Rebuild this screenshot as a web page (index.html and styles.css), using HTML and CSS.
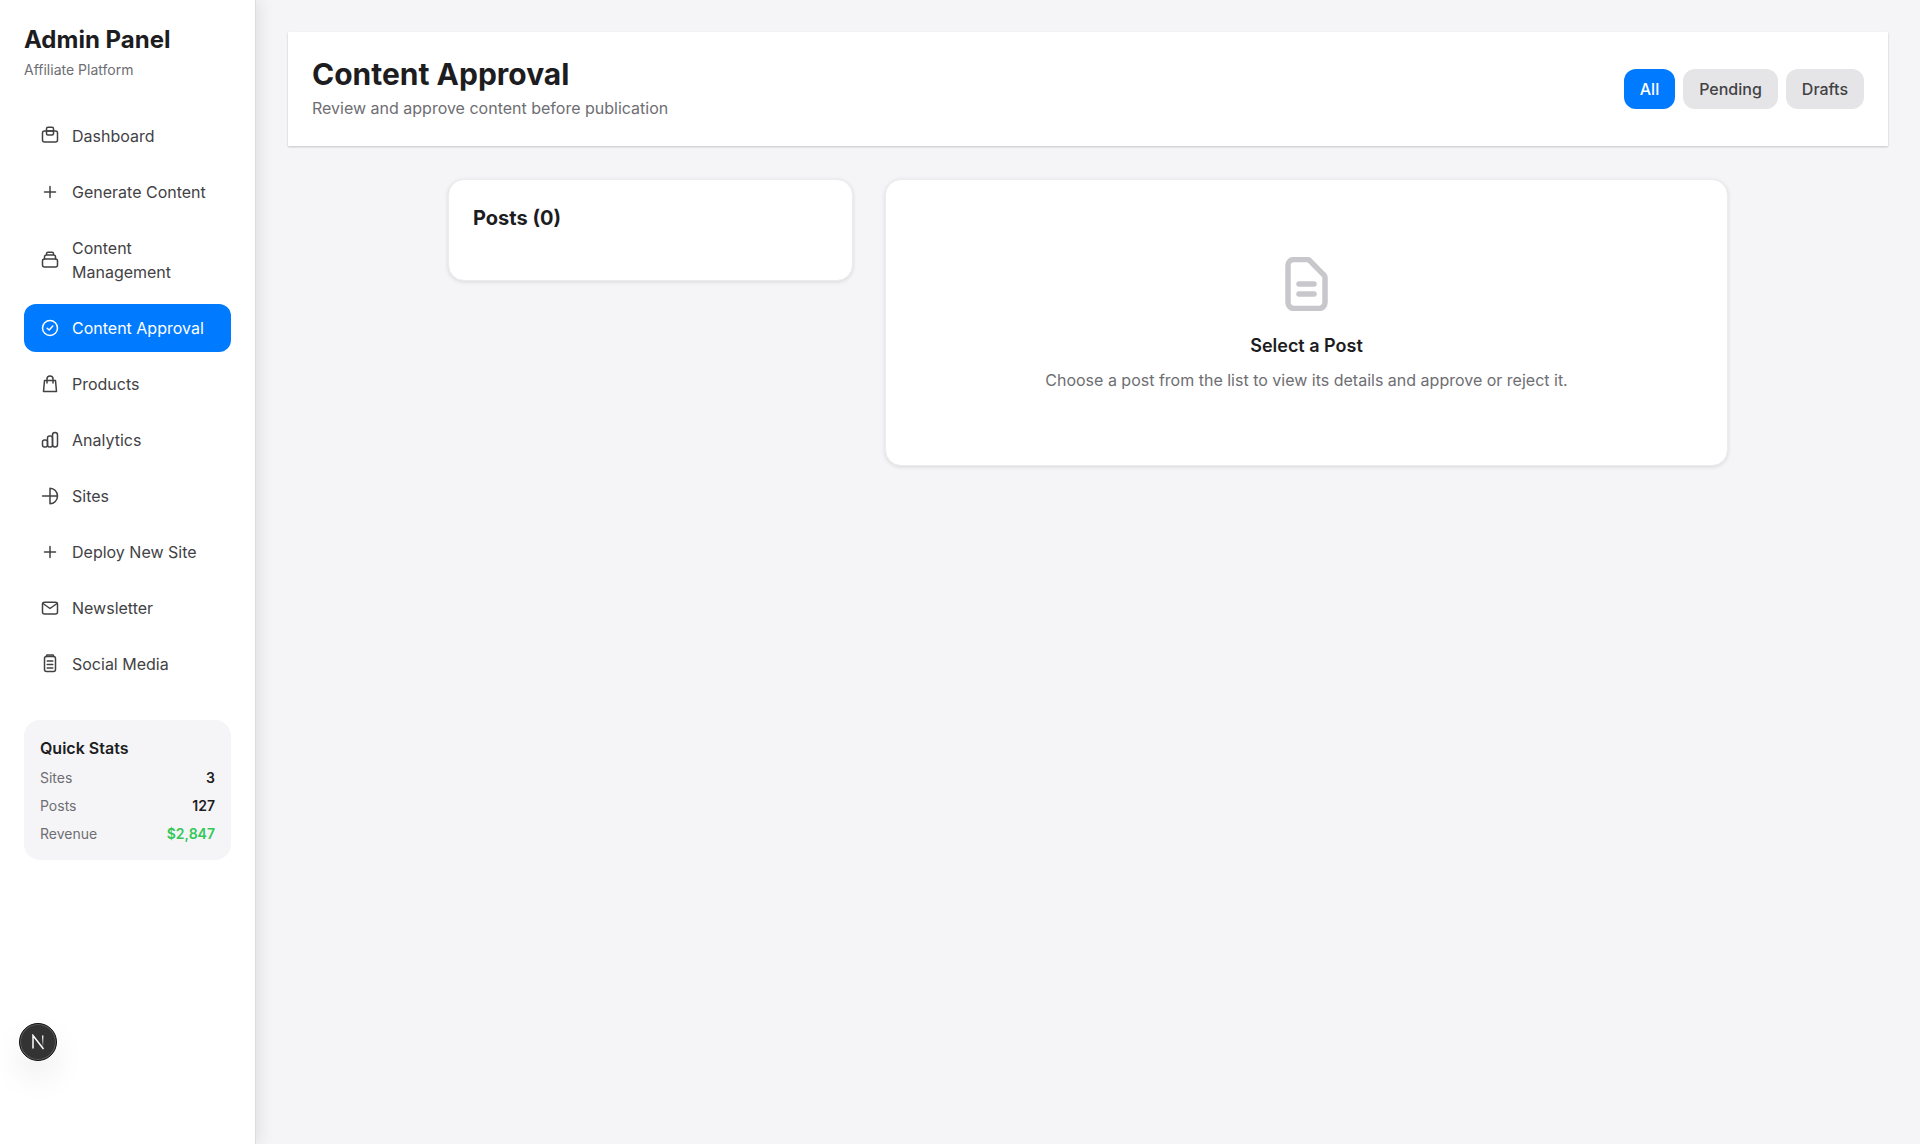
FILE: index.html
```html
<!DOCTYPE html>
<html lang="en">
<head>
    <meta charset="UTF-8">
    <meta name="viewport" content="width=device-width, initial-scale=1.0">
    <title>Content Approval</title>
    <link rel="stylesheet" href="styles.css">
</head>
<body>
    <aside class="sidebar">
        <div class="brand">
            <h1>Admin Panel</h1>
            <p>Affiliate Platform</p>
        </div>
        <nav class="nav">
            <a class="nav-item">
                <svg class="nav-icon" viewBox="0 0 20 20"><rect x="2.5" y="5" width="15" height="11" rx="2"/><rect x="6.5" y="1.2" width="7" height="7.8" rx="1.5"/><path d="M6.5 5h7"/></svg>
                <span>Dashboard</span>
            </a>
            <a class="nav-item">
                <svg class="nav-icon" viewBox="0 0 20 20"><path d="M10 4.5v11M4.5 10h11"/></svg>
                <span>Generate Content</span>
            </a>
            <a class="nav-item">
                <svg class="nav-icon" viewBox="0 0 20 20"><rect x="2.5" y="9" width="15" height="8" rx="2"/><path d="M4.5 9V7a2 2 0 0 1 2-2h7a2 2 0 0 1 2 2v2M6.5 5V3.8A1.5 1.5 0 0 1 8 2.3h4a1.5 1.5 0 0 1 1.5 1.5V5"/></svg>
                <span>Content Management</span>
            </a>
            <a class="nav-item active">
                <svg class="nav-icon" viewBox="0 0 20 20"><circle cx="10" cy="10" r="7.5"/><path d="M7.2 10.2l2 1.8 3.6-4"/></svg>
                <span>Content Approval</span>
            </a>
            <a class="nav-item">
                <svg class="nav-icon" viewBox="0 0 20 20"><path d="M3.5 17.5L4.5 6.5h11l1 11z"/><path d="M7 9V5a3 3 0 0 1 6 0v4"/></svg>
                <span>Products</span>
            </a>
            <a class="nav-item">
                <svg class="nav-icon" viewBox="0 0 20 20"><rect x="2.5" y="10" width="5" height="7" rx="2"/><rect x="7.5" y="6" width="5" height="11" rx="2"/><rect x="12.5" y="2.5" width="5" height="14.5" rx="2.5"/></svg>
                <span>Analytics</span>
            </a>
            <a class="nav-item">
                <svg class="nav-icon" viewBox="0 0 20 20"><path d="M2.5 10h15M10 2.2v15.6M10 2.2a7.5 7.8 0 0 1 0 15.6"/></svg>
                <span>Sites</span>
            </a>
            <a class="nav-item">
                <svg class="nav-icon" viewBox="0 0 20 20"><path d="M10 4.5v11M4.5 10h11"/></svg>
                <span>Deploy New Site</span>
            </a>
            <a class="nav-item">
                <svg class="nav-icon" viewBox="0 0 20 20"><rect x="2.5" y="4.2" width="15" height="11.8" rx="2"/><path d="M3 5.5l7 5 7-5"/></svg>
                <span>Newsletter</span>
            </a>
            <a class="nav-item">
                <svg class="nav-icon" viewBox="0 0 20 20"><rect x="4.5" y="2.5" width="11" height="15" rx="2"/><path d="M6.5 2.5V1.6A.7.7 0 0 1 7.2 1h5.6a.7.7 0 0 1 .7.6v.9M7.2 7h5.6M7.2 10.5h5.6M7.2 14h5.6"/></svg>
                <span>Social Media</span>
            </a>
        </nav>
        <div class="stats">
            <h3>Quick Stats</h3>
            <div class="stat-row"><span>Sites</span><strong>3</strong></div>
            <div class="stat-row"><span>Posts</span><strong>127</strong></div>
            <div class="stat-row"><span>Revenue</span><strong class="green">$2,847</strong></div>
        </div>
    </aside>

    <main class="main">
        <header class="page-header">
            <div>
                <h2>Content Approval</h2>
                <p>Review and approve content before publication</p>
            </div>
            <div class="filters">
                <button class="filter selected">All</button>
                <button class="filter">Pending</button>
                <button class="filter">Drafts</button>
            </div>
        </header>

        <div class="columns">
            <section class="card posts">
                <h3>Posts (0)</h3>
            </section>
            <section class="card empty">
                <svg class="empty-icon" viewBox="0.5 0 48 54"><path d="M11.5 2.5h13a4 4 0 0 1 3 1.3l13.7 14a4 4 0 0 1 1.3 3v24.7a6 6 0 0 1-6 6h-25a6 6 0 0 1-6-6v-37a6 6 0 0 1 6-6z"/><path d="M16.5 27h15M16.5 37h15"/></svg>
                <h4>Select a Post</h4>
                <p>Choose a post from the list to view its details and approve or reject it.</p>
            </section>
        </div>
    </main>

    <div class="dev-badge">
        <svg class="dev-logo" viewBox="0 0 14 16">
            <defs>
                <linearGradient id="stem-fade" x1="0" y1="0" x2="0" y2="1">
                    <stop offset="0" stop-color="#fff"/>
                    <stop offset="1" stop-color="#fff" stop-opacity="0"/>
                </linearGradient>
            </defs>
            <path class="logo-line" d="M2 14.5V1.5L12.5 15"/>
            <rect x="11" y="1.5" width="1.4" height="12" fill="url(#stem-fade)"/>
        </svg>
    </div>
</body>
</html>
```

FILE: styles.css
```css
* {
    box-sizing: border-box;
}
body {
    margin: 0;
    height: 1144px;
    display: flex;
    overflow: hidden;
    font-family: Inter, "Liberation Sans", sans-serif;
    background-color: #f5f5f7;
    color: #1d1d1f;
}
h1, h2, h3, h4, p {
    margin: 0;
}

/* sidebar */
.sidebar {
    width: 256px;
    flex-shrink: 0;
    padding: 24px;
    border-right: 1px solid #dcdcdf;
    background-color: #fff;
    box-shadow: 2px 0 16px rgba(0, 0, 0, 0.1);
}
.brand {
    margin-bottom: 32px;
}
.brand h1 {
    font-size: 24px;
    line-height: 32px;
    font-weight: 700;
}
.brand p {
    margin-top: 4px;
    font-size: 14px;
    line-height: 20px;
    color: #6e6e73;
}
.nav {
    display: flex;
    flex-direction: column;
    gap: 8px;
}
.nav-item {
    display: flex;
    align-items: center;
    gap: 12px;
    padding: 12px 16px;
    border-radius: 12px;
    font-size: 16px;
    line-height: 24px;
    color: #424245;
}
.nav-item.active {
    background-color: #007aff;
    color: #fff;
}
.nav-icon {
    width: 20px;
    height: 20px;
    flex-shrink: 0;
    fill: none;
    stroke: currentColor;
    stroke-width: 1.5;
    stroke-linecap: round;
    stroke-linejoin: round;
}
.stats {
    margin-top: 32px;
    padding: 16px;
    border-radius: 16px;
    background-color: #f5f5f7;
}
.stats h3 {
    margin-bottom: 8px;
    font-size: 16px;
    line-height: 24px;
    font-weight: 600;
}
.stat-row {
    display: flex;
    justify-content: space-between;
    font-size: 14px;
    line-height: 20px;
    color: #6e6e73;
}
.stat-row + .stat-row {
    margin-top: 8px;
}
.stat-row strong {
    font-weight: 600;
    color: #1d1d1f;
}
.stat-row .green {
    color: #34c759;
}

/* main */
.main {
    flex: 1;
    padding: 32px;
}
.page-header {
    display: flex;
    justify-content: space-between;
    align-items: center;
    padding: 24px;
    background-color: #fff;
    box-shadow: 0 1px 2px rgba(0, 0, 0, 0.2);
}
.page-header h2 {
    font-size: 30px;
    line-height: 36px;
    font-weight: 700;
}
.page-header p {
    margin-top: 4px;
    font-size: 16px;
    line-height: 25.6px;
    color: #6e6e73;
}
.filters {
    display: flex;
    gap: 8px;
}
.filter {
    padding: 8px 16px;
    border: none;
    border-radius: 12px;
    font-family: inherit;
    font-size: 16px;
    line-height: 24px;
    font-weight: 500;
    background-color: #e5e5e7;
    color: #424245;
}
.filter.selected {
    background-color: #007aff;
    color: #fff;
}
.columns {
    display: grid;
    grid-template-columns: 405px 1fr;
    gap: 32px;
    align-items: start;
    max-width: 1280px;
    margin: 33px auto 0;
}
.card {
    border: 1px solid #ececee;
    border-radius: 16px;
    background-color: #fff;
    box-shadow: 0 1px 4px rgba(0, 0, 0, 0.12);
}
.posts {
    padding: 24px;
    height: 102px;
}
.posts h3 {
    font-size: 20px;
    line-height: 28px;
    font-weight: 700;
}
.empty {
    height: 287px;
    padding-top: 77px;
    text-align: center;
}
.empty-icon {
    display: block;
    width: 48px;
    height: 54px;
    margin: 0 auto 21px;
    fill: none;
    stroke: #c7c7cc;
    stroke-width: 5.5;
    stroke-linecap: round;
    stroke-linejoin: round;
}
.empty h4 {
    font-size: 18px;
    line-height: 28px;
    font-weight: 600;
}
.empty p {
    margin-top: 8px;
    font-size: 16px;
    line-height: 24px;
    color: #6e6e73;
}

/* floating dev badge */
.dev-badge {
    position: absolute;
    left: 19px;
    top: 1023px;
    width: 38px;
    height: 38px;
    display: flex;
    align-items: center;
    justify-content: center;
    border-radius: 50%;
    border: 1px solid #111;
    background-color: #333;
    box-shadow: inset 0 0 0 1px rgba(255, 255, 255, 0.2), 0 16px 32px rgba(0, 0, 0, 0.08);
}
.dev-logo {
    width: 14px;
    height: 16px;
}
.logo-line {
    fill: none;
    stroke: #fff;
    stroke-width: 1.5;
}
```
